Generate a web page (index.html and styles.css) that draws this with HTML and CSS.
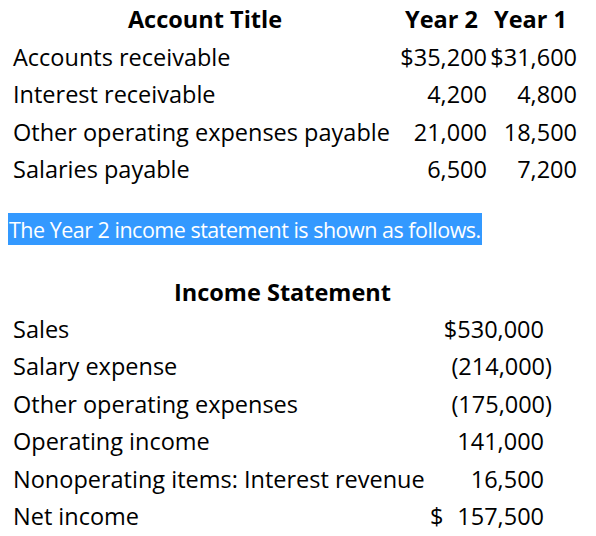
FILE: index.html
```html
<!DOCTYPE html>
<html>
<head>
<meta charset="utf-8">
<link rel="stylesheet" href="styles.css">
</head>
<body>
<div class="page">
  <div class="balances">
    <div class="row">
      <div class="cell title-head">Account Title</div>
      <div class="cell year-head y2">Year 2</div>
      <div class="cell year-head y1">Year 1</div>
    </div>
    <div class="row">
      <div class="cell label">Accounts receivable</div>
      <div class="cell num">$35,200</div>
      <div class="cell num">$31,600</div>
    </div>
    <div class="row">
      <div class="cell label">Interest receivable</div>
      <div class="cell num">4,200</div>
      <div class="cell num">4,800</div>
    </div>
    <div class="row">
      <div class="cell label">Other operating expenses payable</div>
      <div class="cell num">21,000</div>
      <div class="cell num">18,500</div>
    </div>
    <div class="row">
      <div class="cell label">Salaries payable</div>
      <div class="cell num">6,500</div>
      <div class="cell num">7,200</div>
    </div>
  </div>

  <p class="note"><span class="selected">The Year 2 income statement is shown as follows.</span></p>

  <div class="income">
    <div class="irow">
      <div class="icell is-head">Income Statement</div>
    </div>
    <div class="irow">
      <div class="icell label">Sales</div>
      <div class="icell amt"><span class="pad">$530,000</span></div>
    </div>
    <div class="irow">
      <div class="icell label">Salary expense</div>
      <div class="icell amt">(214,000)</div>
    </div>
    <div class="irow">
      <div class="icell label">Other operating expenses</div>
      <div class="icell amt">(175,000)</div>
    </div>
    <div class="irow">
      <div class="icell label">Operating income</div>
      <div class="icell amt"><span class="pad">141,000</span></div>
    </div>
    <div class="irow">
      <div class="icell label">Nonoperating items: Interest revenue</div>
      <div class="icell amt"><span class="pad">16,500</span></div>
    </div>
    <div class="irow">
      <div class="icell label">Net income</div>
      <div class="icell amt split"><span>$</span><span class="pad">157,500</span></div>
    </div>
  </div>
</div>
</body>
</html>
```
FILE: styles.css
```css
html, body {
  margin: 0;
  padding: 0;
  background: #ffffff;
}

body {
  font-family: "Open Sans", "Noto Sans", sans-serif;
  font-size: 23.5px;
  color: #000000;
}

.page {
  padding: 1px 0 0 13px;
}

.balances {
  display: grid;
  grid-template-columns: 384px 90px 90px;
  width: 564px;
}

.row {
  display: contents;
}

.cell {
  line-height: 37.5px;
  white-space: nowrap;
}

.title-head {
  font-weight: 700;
  text-align: center;
}

.year-head {
  font-weight: 700;
}

.y2 {
  padding-left: 8px;
}

.y1 {
  padding-left: 7px;
}

.num {
  text-align: right;
}

.note {
  margin: 24px 0 0 -5px;
  line-height: 32px;
  height: 32px;
}

.selected {
  display: inline-block;
  background: #3399ff;
  color: #ffffff;
  height: 32px;
  line-height: 33px;
  font-size: 21.5px;
  letter-spacing: -0.5px;
  padding: 0 1px 0 1px;
}

.income {
  margin-top: 29px;
  display: grid;
  grid-template-columns: 417px 122px;
  width: 539px;
}

.irow {
  display: contents;
}

.icell {
  line-height: 37.4px;
  white-space: nowrap;
}

.is-head {
  grid-column: 1 / 3;
  text-align: center;
  font-weight: 700;
}

.amt {
  text-align: right;
}

.pad {
  padding-right: 8px;
}

.split {
  display: flex;
  justify-content: space-between;
}
```
